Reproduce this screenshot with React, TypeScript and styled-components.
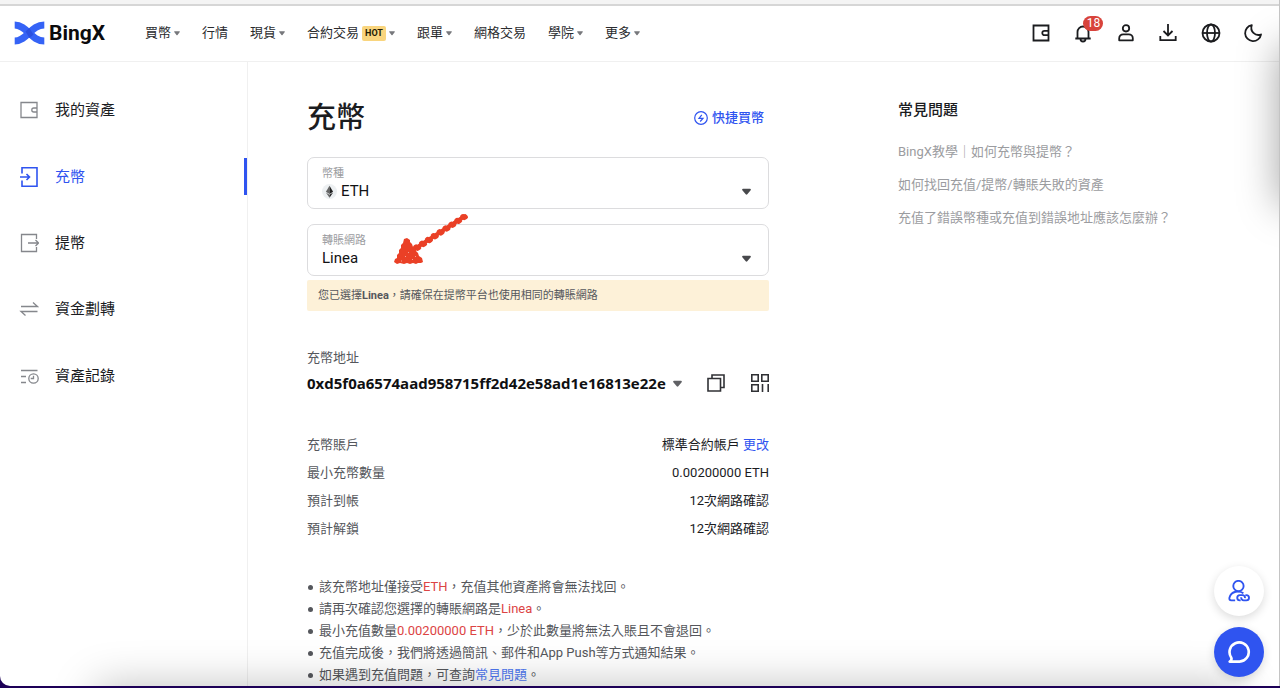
import React from "react";
import styled, { createGlobalStyle, css } from "styled-components";

const color = {
  brand: "#2f54f0",
  ink: "#1b1c1f",
  body: "#55575c",
  muted: "#9b9ca0",
  line: "#f0f0f0",
  danger: "#dc4444",
};

const GlobalStyle = createGlobalStyle`
  *, *::before, *::after { box-sizing: border-box; }
  body {
    margin: 0;
    background: #1d0057;
    color: ${color.ink};
    font: 13px/22px Roboto, "Noto Sans CJK TC", sans-serif;
  }
  button { padding: 0; border: 0; background: none; font: inherit; color: inherit; cursor: pointer; }
  a { color: inherit; text-decoration: none; }
  ul, dl, dd, h1, h2, p { margin: 0; padding: 0; }
  svg { display: block; flex: none; }
`;

const Desktop = styled.div`
  height: 100vh;
  padding-bottom: 2px;
  background: #1d0057;
`;

const Window = styled.div`
  position: relative;
  display: flex;
  flex-direction: column;
  height: 100%;
  overflow: hidden;
  background: #fff;
  border-radius: 0 0 0 10px;
  border-right: 1px solid #c4c4c4;
`;

const Strip = styled.div`
  flex: none;
  height: 6px;
  background: #f4f4f4;
  border-bottom: 2px solid #d6d6d6;
`;

const Header = styled.header`
  flex: none;
  display: flex;
  align-items: center;
  height: 56px;
  padding: 0 16px 1px 14px;
  border-bottom: 1px solid ${color.line};
`;

const Brand = styled.a`
  display: flex;
  align-items: center;
  gap: 4px;
  width: 131px;
  color: #0b0b0d;
  font-size: 21px;
  font-weight: 700;
  line-height: 28px;
`;

const MainNav = styled.nav`
  display: flex;
  gap: 22px;
  flex: 1;
`;

const NavItem = styled.a`
  display: flex;
  align-items: center;
  gap: 3px;
  color: #2a2b2e;
  white-space: nowrap;
`;

const Hot = styled.span`
  padding: 0 3px;
  border-radius: 2px;
  background: #f9d57e;
  color: #241c05;
  font-size: 9px;
  font-weight: 700;
  line-height: 15px;
`;

const Tools = styled.div`
  display: flex;
  justify-content: space-between;
  width: 232px;
`;

const ToolButton = styled.button`
  position: relative;
  width: 20px;
  height: 20px;
`;

const Badge = styled.span`
  position: absolute;
  top: -7px;
  left: 10px;
  width: 20px;
  border-radius: 8px;
  background: #d8433b;
  color: #fff;
  font-size: 12px;
  line-height: 15px;
  text-align: center;
`;

const Layout = styled.div`
  flex: 1;
  min-height: 0;
  display: flex;
`;

const Sidebar = styled.nav`
  flex: none;
  width: 248px;
  padding-top: 15px;
  border-right: 1px solid ${color.line};
`;

const SideList = styled.ul`
  display: grid;
  grid-auto-rows: 1fr;
  align-items: center;
  height: 332px;
  list-style: none;
`;

const SideLink = styled.a<{ $active?: boolean }>`
  display: flex;
  align-items: center;
  gap: 16px;
  height: 37px;
  padding-left: 19px;
  font-size: 15px;
  border-right: 3px solid transparent;
  svg { color: #85878c; }
  ${(p) =>
    p.$active &&
    css`
      color: ${color.brand};
      border-color: ${color.brand};
      svg { color: ${color.brand}; }
    `}
`;

const Content = styled.main`
  flex: 1;
  display: flex;
  gap: 129px;
  padding: 33px 60px 0 59px;
`;

const Deposit = styled.section`
  flex: 0 1 462px;
  min-width: 0;
`;

const TitleRow = styled.div`
  display: flex;
  align-items: center;
  justify-content: space-between;
  height: 46px;
  margin-bottom: 16px;
  padding-right: 5px;
`;

const Title = styled.h1`
  font-size: 29px;
  font-weight: 500;
  line-height: 46px;
`;

const QuickBuy = styled.a`
  display: flex;
  align-items: center;
  gap: 4px;
  color: ${color.brand};
  font-weight: 500;
`;

const Field = styled.div`
  height: 52px;
  margin-bottom: 15px;
  padding: 8px 17px 0 14px;
  border: 1px solid #dcdcde;
  border-radius: 7px;
`;

const FieldLabel = styled.label`
  display: block;
  color: ${color.muted};
  font-size: 11px;
  line-height: 15px;
`;

const FieldRow = styled.div`
  display: flex;
  align-items: center;
  gap: 4px;
  height: 20px;
`;

const Select = styled.select`
  flex: 1;
  min-width: 0;
  padding: 0;
  border: 0;
  outline: 0;
  appearance: none;
  background: transparent;
  color: #111214;
  font: inherit;
  font-size: 15px;
  line-height: 20px;
`;

const NetworkGroup = styled.div`
  position: relative;
  ${Field} { margin-bottom: 4px; }
`;

const Pointer = styled.svg`
  position: absolute;
  left: 86px;
  top: -12px;
  pointer-events: none;
`;

const Notice = styled.p`
  padding: 0 11px;
  border-radius: 2px;
  background: #fdf1d8;
  color: ${color.body};
  font-size: 11px;
  line-height: 31px;
`;

const AddressBlock = styled.div`
  margin-top: 36px;
  color: ${color.body};
`;

const AddressRow = styled.div`
  display: flex;
  align-items: center;
  gap: 24px;
  height: 28px;
  padding-right: 1px;
`;

const Address = styled.button`
  display: flex;
  align-items: center;
  gap: 7px;
  margin-right: auto;
  color: #0f1012;
  font-family: "Open Sans", sans-serif;
  font-size: 15px;
  font-weight: 700;
`;

const IconButton = styled.button`
  color: #303135;
`;

const Facts = styled.dl`
  margin-top: 34px;
`;

const Fact = styled.div`
  display: flex;
  justify-content: space-between;
  line-height: 28px;
  dt { color: ${color.body}; }
`;

const TextLink = styled.a`
  color: ${color.brand};
`;

const Tips = styled.ul`
  margin-top: 33px;
  padding-left: 12px;
  list-style: none;
  color: ${color.body};
  li::before {
    content: "";
    float: left;
    width: 5px;
    height: 5px;
    margin: 9px 0 0 -11px;
    border-radius: 50%;
    background: ${color.body};
  }
  ${TextLink} { color: #4f78f2; }
`;

const Alert = styled.span`
  color: ${color.danger};
`;

const Faq = styled.aside`
  flex: 1;
  padding-top: 4px;
`;

const FaqTitle = styled.h2`
  margin-bottom: 14px;
  font-size: 15px;
  font-weight: 500;
  line-height: 22px;
`;

const FaqLink = styled.a`
  display: block;
  color: ${color.muted};
  line-height: 33px;
  white-space: nowrap;
`;

const Shade = styled.div<{ $side: "right" | "bottom" }>`
  position: absolute;
  pointer-events: none;
  ${(p) =>
    p.$side === "right"
      ? css`
          left: 100%;
          top: 46px;
          width: 60px;
          height: 160px;
          box-shadow: 0 0 40px rgba(0, 0, 0, 0.36);
        `
      : css`
          top: 100%;
          left: 96px;
          right: 40px;
          height: 60px;
          box-shadow: 0 0 44px rgba(0, 0, 0, 0.25);
        `}
`;

const Floating = styled.div`
  position: absolute;
  right: 15px;
  bottom: 9px;
  display: grid;
  gap: 11px;
`;

const RoundButton = styled.button<{ $filled?: boolean }>`
  display: grid;
  place-items: center;
  width: 50px;
  height: 50px;
  border-radius: 50%;
  background: ${(p) => (p.$filled ? color.brand : "#fff")};
  color: ${(p) => (p.$filled ? "#fff" : color.brand)};
  box-shadow: 0 3px 10px rgba(0, 0, 0, 0.14);
`;

const Caret = ({ width = 6, fill = "#77787c" }: { width?: number; fill?: string }) => (
  <svg width={width} height={width} viewBox="0 0 8 8" aria-hidden="true">
    <path d="M.9 1.6h6.2c.7 0 1 .7.6 1.2L4.7 6.5a.9.9 0 0 1-1.4 0L.3 2.8C-.1 2.3.2 1.6.9 1.6Z" fill={fill} />
  </svg>
);

const Glyph = ({ size = 20, stroke = 1.8, children }: { size?: number; stroke?: number; children: React.ReactNode }) => (
  <svg width={size} height={size} viewBox="0 0 20 20" fill="none" stroke="currentColor" strokeWidth={stroke} aria-hidden="true">
    {children}
  </svg>
);

const Logo = () => (
  <svg width="31" height="24" viewBox="0 0 31 24" aria-hidden="true">
    <path d="M.7 20C13 20 17 4 30.300 4" fill="none" stroke="#3563f6" strokeWidth="7" />
    <path d="M.7 4C13 4 17 20 30.300 20" fill="none" stroke="#3563f6" strokeWidth="7" />
    <path d="M11.500 10.500 15.300 7 19.500 13.500 15.500 17Z" fill="#2b50e0" />
  </svg>
);

const nav = [
  { label: "買幣", menu: true },
  { label: "行情" },
  { label: "現貨", menu: true },
  { label: "合約交易", menu: true, hot: true },
  { label: "跟單", menu: true },
  { label: "網格交易" },
  { label: "學院", menu: true },
  { label: "更多", menu: true },
];

const tools = [
  { label: "錢包", icon: <path d="M2.500 2.500h15v15h-15ZM17.500 7.800h-4a2.200 2.200 0 0 0 0 4.400h4" /> },
  {
    label: "通知",
    badge: 18,
    icon: <path d="M4.500 15V9a5.500 5.500 0 0 1 11 0v6M2.300 15.500h15.400M7.500 16a2.500 2.500 0 0 0 5 0" />,
  },
  {
    label: "帳戶",
    icon: (
      <>
        <circle cx="10" cy="5.300" r="3.200" />
        <path d="M3.200 17.300v-2a4 4 0 0 1 4-4h5.600a4 4 0 0 1 4 4v2Z" strokeLinejoin="round" />
      </>
    ),
  },
  { label: "下載", icon: <path d="M10 1v11.500M5.500 8l4.500 4.500L14.500 8M2.300 13v4.200h15.400V13" /> },
  {
    label: "語言",
    icon: (
      <>
        <circle cx="10" cy="10" r="8.500" />
        <ellipse cx="10" cy="10" rx="4" ry="8.500" />
        <path d="M1.500 10h17" />
      </>
    ),
  },
  { label: "深色模式", icon: <path d="M8.800 2.200A8 8 0 1 0 18 11.500 7.200 7.200 0 0 1 8.800 2.200Z" strokeLinejoin="round" /> },
];

const side = [
  { label: "我的資產", icon: <path d="M2 2.500h16v15H2ZM18 8h-3.200a2 2 0 0 0 0 4H18" /> },
  { label: "充幣", active: true, icon: <path d="M3 6.500V.800h15v18.400H3v-5.700M1 10h9.500M7.500 7l3 3-3 3" /> },
  { label: "提幣", icon: <path d="M17.500 6V1.500h-15v17h15V14M9 10h10.500M16.500 7l3 3-3 3" /> },
  { label: "資金劃轉", icon: <path d="M2 7.500h16.500L14 3.500M18.500 12.500H2L6.500 16.500" /> },
  {
    label: "資產記錄",
    icon: (
      <>
        <path d="M2 4.500h16.500M2 10.500h5M2 16.500h5M14.500 9.800v2.700h-2.800" />
        <circle cx="14.500" cy="12.500" r="4.700" />
      </>
    ),
  },
];

const faqs = ["BingX教學｜如何充幣與提幣？", "如何找回充值/提幣/轉賬失敗的資產", "充值了錯誤幣種或充值到錯誤地址應該怎麼辦？"];

export default function App() {
  return (
    <Desktop>
      <GlobalStyle />
      <Window>
        <Strip />
        <Header>
          <Brand href="#">
            <Logo />
            BingX
          </Brand>
          <MainNav>
            {nav.map((item) => (
              <NavItem href="#" key={item.label}>
                {item.label}
                {item.hot && <Hot>HOT</Hot>}
                {item.menu && <Caret />}
              </NavItem>
            ))}
          </MainNav>
          <Tools>
            {tools.map((tool) => (
              <ToolButton key={tool.label} aria-label={tool.label}>
                <Glyph>{tool.icon}</Glyph>
                {tool.badge && <Badge>{tool.badge}</Badge>}
              </ToolButton>
            ))}
          </Tools>
        </Header>
        <Layout>
          <Sidebar>
            <SideList>
              {side.map((item) => (
                <li key={item.label}>
                  <SideLink href="#" $active={item.active}>
                    <Glyph stroke={item.active ? 1.6 : 1.3}>{item.icon}</Glyph>
                    {item.label}
                  </SideLink>
                </li>
              ))}
            </SideList>
          </Sidebar>
          <Content>
            <Deposit>
              <TitleRow>
                <Title>充幣</Title>
                <QuickBuy href="#">
                  <svg width="14" height="14" viewBox="0 0 14 14" fill="none" stroke="currentColor" aria-hidden="true">
                    <circle cx="7" cy="7" r="6.300" strokeWidth="1.200" />
                    <path d="M7.800 3.800 5 7.300h4L6.200 10.500" strokeWidth="1.200" />
                  </svg>
                  快捷買幣
                </QuickBuy>
              </TitleRow>
              <Field>
                <FieldLabel htmlFor="coin">幣種</FieldLabel>
                <FieldRow>
                  <svg width="15" height="15" viewBox="0 0 15 15" aria-hidden="true">
                    <circle cx="7.500" cy="7.500" r="7.500" fill="#edf0f2" />
                    <path d="M7.500 1.800 3.900 7.800l3.600 2.100Z" fill="#666" />
                    <path d="M7.500 1.800l3.600 6-3.600 2.100Z" fill="#222" />
                    <path d="M3.900 8.600l3.600 2.100v3Z" fill="#666" />
                    <path d="M11.100 8.600l-3.600 2.100v3Z" fill="#222" />
                  </svg>
                  <Select id="coin">
                    <option>ETH</option>
                  </Select>
                  <Caret width={9} fill="#48494c" />
                </FieldRow>
              </Field>
              <NetworkGroup>
                <Field>
                  <FieldLabel htmlFor="network">轉賬網路</FieldLabel>
                  <FieldRow>
                    <Select id="network">
                      <option>Linea</option>
                    </Select>
                    <Caret width={9} fill="#48494c" />
                  </FieldRow>
                </Field>
                <Pointer width="78" height="56" viewBox="0 0 78 56" fill="none" stroke="#ea4026" strokeLinecap="round" aria-hidden="true">
                  <path d="M72 4 20 38" strokeWidth="4" />
                  <path d="M73 5 23 38" strokeWidth="4" strokeDasharray="2 5" />
                  <path d="M70 4 22 35" strokeWidth="4" strokeDasharray="1 6" />
                  <path
                    d="M14 26l3 2 0 2 2 2 1 3 2 1 1 3 2 2 1 3 3 2 1 4-2 1-3 0-2 1-3-1-3 1-3-1-3 1-4-1-3 1-3-2 1-3 2-1 0-3 2-2 0-3 2-2 0-3 2-2 1-4Z"
                    fill="#ea4026"
                    stroke="none"
                  />
                  <path
                    d="M12 45l1-1M19 48l1-1M22 44l1 1M15 40l1 1M8 49h1"
                    stroke="#fff"
                    strokeWidth="1"
                    strokeLinecap="butt"
                    opacity=".5"
                  />
                </Pointer>
              </NetworkGroup>
              <Notice>
                您已選擇<b>Linea</b>，請確保在提幣平台也使用相同的轉賬網路
              </Notice>
              <AddressBlock>
                充幣地址
                <AddressRow>
                  <Address>
                    0xd5f0a6574aad958715ff2d42e58ad1e16813e22e
                    <Caret width={9} fill="#606165" />
                  </Address>
                  <IconButton aria-label="複製">
                    <Glyph stroke={1.6}>
                      <path d="M2 5.500h12.500V18H2ZM6 5.500V2h12v12.500h-3.500" />
                    </Glyph>
                  </IconButton>
                  <IconButton aria-label="QR碼">
                    <Glyph stroke={1.6}>
                      <path d="M1.800 1.800h6.400v6.400H1.800ZM11.800 1.800h6.400v6.400h-6.400ZM1.800 11.800h6.400v6.400H1.800ZM12.500 11v8M18.200 11v8" />
                    </Glyph>
                  </IconButton>
                </AddressRow>
              </AddressBlock>
              <Facts>
                <Fact>
                  <dt>充幣賬戶</dt>
                  <dd>
                    標準合約帳戶 <TextLink href="#">更改</TextLink>
                  </dd>
                </Fact>
                <Fact>
                  <dt>最小充幣數量</dt>
                  <dd>0.00200000 ETH</dd>
                </Fact>
                <Fact>
                  <dt>預計到帳</dt>
                  <dd>12次網路確認</dd>
                </Fact>
                <Fact>
                  <dt>預計解鎖</dt>
                  <dd>12次網路確認</dd>
                </Fact>
              </Facts>
              <Tips>
                <li>
                  該充幣地址僅接受<Alert>ETH</Alert>，充值其他資產將會無法找回。
                </li>
                <li>
                  請再次確認您選擇的轉賬網路是<Alert>Linea</Alert>。
                </li>
                <li>
                  最小充值數量<Alert>0.00200000 ETH</Alert>，少於此數量將無法入賬且不會退回。
                </li>
                <li>充值完成後，我們將透過簡訊、郵件和App Push等方式通知結果。</li>
                <li>
                  如果遇到充值問題，可查詢<TextLink href="#">常見問題</TextLink>。
                </li>
              </Tips>
            </Deposit>
            <Faq>
              <FaqTitle>常見問題</FaqTitle>
              {faqs.map((q) => (
                <FaqLink href="#" key={q}>
                  {q}
                </FaqLink>
              ))}
            </Faq>
          </Content>
        </Layout>
        <Shade $side="right" />
        <Shade $side="bottom" />
        <Floating>
          <RoundButton aria-label="邀請好友">
            <Glyph size={22} stroke={1.7}>
              <circle cx="9.500" cy="5.500" r="4.700" />
              <path d="M6.500 18.500H3c-1.500 0-2-1-1.700-2.300.7-3 3-5 5.700-5.500 2.500-.4 5-.2 7 1.300M11.500 18.500h-.700a2.400 2.400 0 0 1 0-4.800h2.400a2.300 2.300 0 0 1 2.200 2.800M15.800 13.700h.900a2.400 2.400 0 0 1 0 4.800h-2.400a2.300 2.300 0 0 1-2.200-2.800" />
            </Glyph>
          </RoundButton>
          <RoundButton $filled aria-label="客服">
            <Glyph size={24} stroke={2.2}>
              <path d="M3.500 14.500A8 8 0 1 1 10.500 18H2.200c1.400-.7 1.900-2 1.300-3.500Z" strokeLinejoin="round" />
            </Glyph>
          </RoundButton>
        </Floating>
      </Window>
    </Desktop>
  );
}
